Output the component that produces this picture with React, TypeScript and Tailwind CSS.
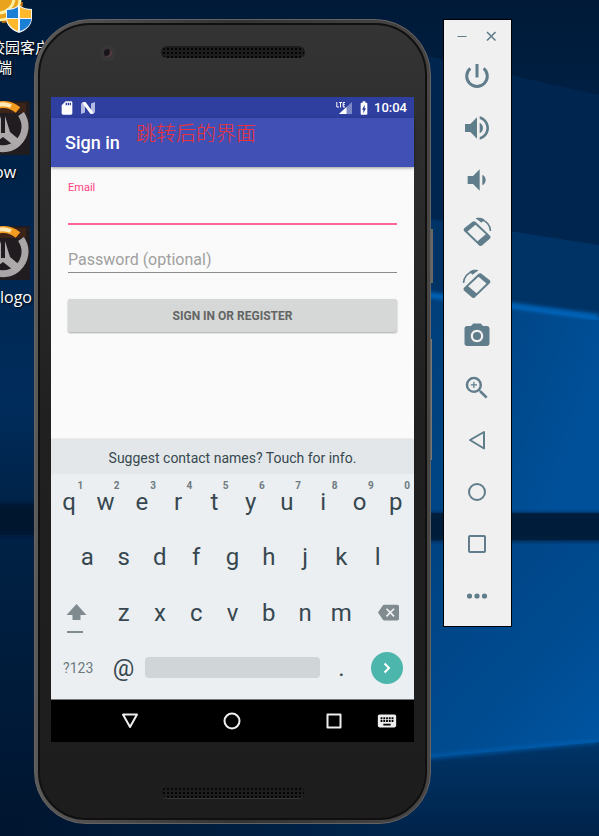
import type { ReactNode } from "react";
import {
  MdBackspace,
  MdBatteryChargingFull,
  MdCameraAlt,
  MdKeyboard,
  MdSdStorage,
  MdVolumeDown,
  MdVolumeUp,
  MdZoomIn,
} from "react-icons/md";

function Wallpaper() {
  return (
    <svg
      className="absolute inset-0 h-full w-full"
      viewBox="0 0 599 836"
      preserveAspectRatio="none"
      aria-hidden="true"
    >
      <defs>
        <linearGradient id="sky" x1="0" y1="0" x2="0" y2="1">
          <stop offset="0" stopColor="#001a38" />
          <stop offset="0.2" stopColor="#00234a" />
          <stop offset="1" stopColor="#00254c" />
        </linearGradient>
        <linearGradient id="left" x1="0" y1="0" x2="0" y2="1">
          <stop offset="0" stopColor="#001b3a" />
          <stop offset="0.48" stopColor="#002c5c" />
          <stop offset="0.6" stopColor="#002348" />
          <stop offset="1" stopColor="#00152f" />
        </linearGradient>
        <linearGradient id="fade">
          <stop offset="0" stopColor="#00152f" />
          <stop offset="1" stopColor="#00254c" />
        </linearGradient>
        <linearGradient id="pane" x1="0" y1="0" x2="1" y2="0.4">
          <stop offset="0" stopColor="#003b73" />
          <stop offset="1" stopColor="#005099" />
        </linearGradient>
        <linearGradient id="pane2" x1="0" y1="0" x2="1" y2="1">
          <stop offset="0" stopColor="#00417f" />
          <stop offset="0.6" stopColor="#004b90" />
          <stop offset="1" stopColor="#0056a4" />
        </linearGradient>
        <linearGradient id="base" x1="0" y1="0" x2="0" y2="1">
          <stop offset="0" stopColor="#003467" />
          <stop offset="1" stopColor="#00234a" />
        </linearGradient>
        <filter id="soft">
          <feGaussianBlur stdDeviation="2" />
        </filter>
      </defs>
      <rect width="599" height="836" fill="url(#sky)" />
      <rect width="200" height="836" fill="url(#left)" />
      <rect y="815" width="400" height="21" fill="url(#fade)" />
      <path d="M400 50 599 95V245L400 214Z" fill="#00264f" />
      <path d="M400 214 599 245V320L400 292Z" fill="#003365" />
      <path d="M400 292 599 318V513H400Z" fill="url(#pane)" />
      <path d="M400 291 599 317" stroke="#0078dc" strokeWidth="4" filter="url(#soft)" />
      <path d="M400 540H599V745L400 762Z" fill="url(#pane2)" />
      <path d="M400 760 599 742V836H400Z" fill="url(#base)" />
      <path d="M400 760 599 741" stroke="#0061b4" strokeWidth="3" filter="url(#soft)" />
      <rect x="-10" y="504" width="130" height="31" fill="#00152f" filter="url(#soft)" />
      <rect x="400" y="513" width="210" height="28" fill="#001b3a" filter="url(#soft)" />
    </svg>
  );
}

function ClientIcon() {
  return (
    <svg width="44" height="36" viewBox="0 0 44 36" className="block" aria-hidden="true">
      <circle cx="16" cy="4" r="17" fill="#e9a31c" />
      <path d="M12 20C22 20 31 12 32 0M12 13C20 12 25 6 26 0" stroke="#fff0a0" strokeWidth="3" fill="none" />
      <path d="M14 22C24 22 34 14 34 2" stroke="#b96e08" strokeWidth="2" fill="none" />
      <path d="M31 5C27 8 22 9 18 9V18C18 26 25 31 31 33 37 31 44 26 44 18V9C40 9 35 8 31 5Z" fill="#f4f6f8" />
      <path d="M30 7C27 9 23 10 19 10V18H30ZM32 19V31C38 29 43 25 43 19Z" fill="#1c7fd6" />
      <path d="M32 7C35 9 39 10 43 10V18H32ZM30 19V31C25 29 20 25 19 19Z" fill="#fdb82b" />
    </svg>
  );
}

function GameIcon() {
  return (
    <svg width="54" height="54" viewBox="0 0 54 54" className="block" aria-hidden="true">
      <rect width="54" height="54" fill="#211c20" />
      <path d="M10 2H50V12H10Z" fill="#5a2c12" opacity=".5" />
      <path d="M11 10A23 23 0 0 1 42 9" stroke="#f39a21" strokeWidth="7" fill="none" />
      <path d="M14 7A24 24 0 0 1 35 5" stroke="#ffe9b8" strokeWidth="4" fill="none" />
      <path d="M45 13A22 22 0 1 1 9 13" stroke="#aaa6a8" strokeWidth="7" fill="none" />
      <path d="M25 15 20 31 8 41 13 47 27 36 41 47 46 41 34 31 29 15V32H25Z" fill="#aeaaac" />
    </svg>
  );
}

const desktopText =
  "font-['Open_Sans','Noto_Sans_CJK_SC',sans-serif] leading-5 text-white whitespace-nowrap [text-shadow:1px_1px_2px_#000]";

function DesktopIcons() {
  return (
    <div className="absolute top-0 -left-6 flex w-[72px] flex-col">
      <figure className="flex h-[101px] flex-col">
        <div className="ml-3">
          <ClientIcon />
        </div>
        <figcaption className={`${desktopText} ml-[14px] pt-px text-[15px]`}>
          校园客户
          <br />
          <span className="ml-[7px]">端</span>
        </figcaption>
      </figure>
      <figure className="flex h-[125px] flex-col">
        <GameIcon />
        <figcaption className={`${desktopText} mt-[7px] ml-[18px] text-base`}>ow</figcaption>
      </figure>
      <figure className="flex flex-col">
        <GameIcon />
        <figcaption className={`${desktopText} mt-[7px] ml-6 text-base`}>logo</figcaption>
      </figure>
    </div>
  );
}

function Speaker() {
  return (
    <div className="h-[13px] w-36 rounded-full border border-[#1b1b1b] border-b-[#343434] bg-[#1d1d1d] bg-[radial-gradient(#050505_1px,transparent_1px)] bg-[size:4px_4px]" />
  );
}

function StatusBar() {
  return (
    <div className="flex h-[21px] items-center bg-[#2f3f9f] px-[7px] text-white">
      <MdSdStorage size={16} className="ml-px" />
      <svg width="14" height="12" viewBox="0 0 14 12" className="ml-[6px]" aria-hidden="true">
        <path d="M0 1.500 4 0V10.500L0 12ZM10 1.500 14 0V10.500L10 12Z" fill="#b3bbe3" />
        <path d="M1 .6 4.500 0 13 11.400 9.500 12Z" fill="#fff" />
      </svg>
      <div className="ml-auto flex items-center">
        <svg width="17" height="14" viewBox="0 0 17 14" className="mr-[3px]" aria-hidden="true">
          <path d="M16 1V13H3Z" fill="#7d88c6" />
          <path d="M10.500 6V13H3Z" fill="#fff" />
          <path d="M.8 1V6H3M3.200 1.500H6M4.500 1.500V6.500M9 1.500H7.200V6H9M7.200 3.700H8.800" stroke="#fff" fill="none" />
        </svg>
        <MdBatteryChargingFull size={16} className="mr-[2px]" />
        <span className="text-[13px] leading-5 font-medium">10:04</span>
      </div>
    </div>
  );
}

function SignInForm() {
  return (
    <form className="flex h-[273px] flex-col px-[17px] pt-3" onSubmit={(e) => e.preventDefault()}>
      <label htmlFor="email" className="text-[11px] leading-[18px] text-[#ff4081]">
        Email
      </label>
      <input
        id="email"
        type="email"
        className="h-7 border-b-2 border-[#ff6496] bg-transparent text-base text-[#333] outline-none"
      />
      <div className="relative mt-[22px] flex">
        <label htmlFor="password" className="sr-only">
          Password (optional)
        </label>
        <input
          id="password"
          type="password"
          placeholder="Password (optional)"
          className="h-[26px] w-full border-b border-[#8c8c8c] bg-transparent text-base text-[#333] outline-none placeholder:text-[#a0a0a0]"
        />
      </div>
      <button
        type="submit"
        className="mt-[26px] h-[33px] rounded-xs bg-[#d6d8d7] text-xs font-bold text-[#636564] shadow-[0_1px_2px_#0005]"
      >
        SIGN IN OR REGISTER
      </button>
    </form>
  );
}

function Key({ label, hint }: { label: string; hint?: string }) {
  return (
    <button type="button" className="relative h-[55px] flex-1 text-2xl leading-none text-[#37474f]">
      {label}
      {hint && (
        <span className="absolute top-[6px] right-1 text-[10px] leading-3 font-bold text-[#6d7a80]">{hint}</span>
      )}
    </button>
  );
}

function Keyboard() {
  return (
    <div className="bg-[#ebeff2] text-[#37474f]">
      <p className="h-[34px] bg-[#e3e7ea] pt-px text-center text-sm leading-[34px] shadow-[0_-1px_2px_#0002]">
        Suggest contact names? Touch for info.
      </p>
      <div className="flex">
        {"qwertyuiop".split("").map((letter, i) => (
          <Key key={letter} label={letter} hint={String((i + 1) % 10)} />
        ))}
      </div>
      <div className="flex px-[5%]">
        {"asdfghjkl".split("").map((letter) => (
          <Key key={letter} label={letter} />
        ))}
      </div>
      <div className="mt-px flex">
        <button type="button" aria-label="Shift" className="flex w-[15%] items-center pt-3 pl-[15px]">
          <svg width="21" height="30" viewBox="0 0 21 30" aria-hidden="true">
            <path d="M10.500 0 20.500 11H14.500V16H6.500V11H.5Z" fill="#808b90" />
            <path d="M1 28H17" stroke="#808b90" strokeWidth="2" />
          </svg>
        </button>
        {"zxcvbnm".split("").map((letter) => (
          <Key key={letter} label={letter} />
        ))}
        <button type="button" aria-label="Backspace" className="flex w-[15%] items-center justify-end pr-[15px] text-[#808b90]">
          <MdBackspace size={21} />
        </button>
      </div>
      <div className="flex h-[60px] items-start border-b border-[#777]">
        <button type="button" className="h-[55px] w-[15%] text-sm text-[#6d7a80]">
          ?123
        </button>
        <button type="button" className="h-[55px] w-[10%] text-2xl">
          @
        </button>
        <button type="button" aria-label="Space" className="mx-[3px] mt-[17px] h-[21px] flex-1 rounded-sm bg-[#d0d5d8]" />
        <button type="button" className="h-[55px] w-[10%] text-2xl">
          .
        </button>
        <span className="flex w-[15%] justify-center pt-3">
          <button
            type="button"
            aria-label="Next"
            className="flex size-8 items-center justify-center rounded-full bg-[#4db6ac] text-white"
          >
            <svg width="20" height="20" viewBox="0 0 20 20" fill="none" stroke="currentColor" strokeWidth="2" aria-hidden="true">
              <path d="M7.500 5.500 12 10 7.500 14.500" />
            </svg>
          </button>
        </span>
      </div>
    </div>
  );
}

function NavBar() {
  return (
    <nav className="flex h-[42px] items-center bg-black pr-4 pl-[68px] text-[#eee]">
      <button type="button" aria-label="Back">
        <svg width="22" height="22" viewBox="0 0 22 22" fill="none" stroke="currentColor" strokeWidth="2" strokeLinejoin="round">
          <path d="M4 4.500H18L11 17Z" />
        </svg>
      </button>
      <button type="button" aria-label="Home" className="ml-auto">
        <svg width="22" height="22" viewBox="0 0 22 22" fill="none" stroke="currentColor" strokeWidth="2">
          <circle cx="11" cy="11" r="7.500" />
        </svg>
      </button>
      <button type="button" aria-label="Overview" className="ml-auto">
        <svg width="22" height="22" viewBox="0 0 22 22" fill="none" stroke="currentColor" strokeWidth="2" strokeLinejoin="round">
          <rect x="4.500" y="4.500" width="13" height="13" />
        </svg>
      </button>
      <button type="button" aria-label="Switch keyboard" className="ml-[31px]">
        <MdKeyboard size={22} />
      </button>
    </nav>
  );
}

function Phone() {
  return (
    <div className="absolute top-[19px] left-[34px] w-[397px]">
      <div className="absolute top-[210px] -right-[2px] h-[54px] w-1 bg-[#6a6767]" />
      <div className="absolute top-[320px] -right-px h-[121px] w-1 bg-[#777]" />
      <div className="relative rounded-t-[56px] rounded-b-[52px] border border-[#656262] bg-linear-to-r from-[#5c5959] via-[#333] to-[#484545] p-[3px]">
        <div className="rounded-t-[52px] rounded-b-[48px] border-2 border-[#101010] bg-linear-to-b from-[#343434] via-[#202020] to-[#1d1d1d] px-[11px]">
          <div className="relative flex h-[72px] justify-center pt-[21px]">
            <div className="absolute top-5 left-[49px] flex size-4 items-center justify-center rounded-full bg-[#383637]">
              <div className="size-2 rounded-full bg-[#17141a] shadow-[inset_-2px_-1px_1px_#584047]" />
            </div>
            <Speaker />
          </div>
          <div className="bg-[#fafafa] font-[Roboto,sans-serif]">
            <StatusBar />
            <header className="relative flex h-[49px] items-center bg-[#4050b5] pl-[14px] shadow-[0_1px_3px_#0006]">
              <h1 className="text-lg font-medium text-white">Sign in</h1>
              <p className="absolute top-[2px] left-[85px] font-['Noto_Sans_CJK_SC',sans-serif] text-xl leading-[26px] font-light text-[#f03038]">
                跳转后的界面
              </p>
            </header>
            <SignInForm />
            <Keyboard />
            <NavBar />
          </div>
          <div className="flex h-[76px] justify-center pt-[44px]">
            <Speaker />
          </div>
        </div>
      </div>
    </div>
  );
}

function RotateIcon({ flipped = false }: { flipped?: boolean }) {
  return (
    <svg width="32" height="32" viewBox="0 0 32 32" className={flipped ? "-scale-x-100" : ""} aria-hidden="true">
      <path
        fill="currentColor"
        fillRule="evenodd"
        d="M11.800 5.500Q13.200 4.700 14.500 5.800L29 19.800Q30.200 21.300 29 22.600L21 29.600Q19.500 30.600 18.200 29.500L3 15Q2 13.600 3.200 12.300ZM14.500 8.800 6.500 15.500 16.500 25.300 24.800 18.300Z"
      />
      <path d="M20 3.500C25.500 5 29 9 29.500 15" stroke="currentColor" strokeWidth="1.600" fill="none" />
      <path d="M14.500 2.200C18 1.200 21 1.800 23.500 3.400L20.500 6.800Z" fill="currentColor" />
    </svg>
  );
}

function Outline({ children }: { children: ReactNode }) {
  return (
    <svg width="24" height="24" viewBox="0 0 24 24" fill="none" stroke="currentColor" strokeWidth="2" strokeLinejoin="round" aria-hidden="true">
      {children}
    </svg>
  );
}

const tools: { name: string; icon: ReactNode }[] = [
  {
    name: "Power",
    icon: (
      <svg width="32" height="32" viewBox="0 0 32 32" fill="none" stroke="currentColor" strokeWidth="3" aria-hidden="true">
        <path d="M16 4V17.500M9.300 8.300A10.300 10.300 0 1 0 22.700 8.300" />
      </svg>
    ),
  },
  { name: "Volume up", icon: <MdVolumeUp size={32} /> },
  { name: "Volume down", icon: <MdVolumeDown size={32} /> },
  { name: "Rotate left", icon: <RotateIcon /> },
  { name: "Rotate right", icon: <RotateIcon flipped /> },
  { name: "Take screenshot", icon: <MdCameraAlt size={30} /> },
  { name: "Zoom", icon: <MdZoomIn size={30} /> },
  { name: "Back", icon: <Outline><path d="M19 4V20.500L5 12Z" /></Outline> },
  { name: "Home", icon: <Outline><circle cx="12" cy="12" r="8" /></Outline> },
  { name: "Overview", icon: <Outline><rect x="4" y="4" width="16" height="16" rx="1" /></Outline> },
  {
    name: "More",
    icon: (
      <svg width="24" height="24" viewBox="0 0 24 24" fill="currentColor" aria-hidden="true">
        <circle cx="4.500" cy="12" r="2.600" />
        <circle cx="12" cy="12" r="2.600" />
        <circle cx="19.500" cy="12" r="2.600" />
      </svg>
    ),
  },
];

function EmulatorToolbar() {
  return (
    <aside className="absolute top-[19px] left-[443px] flex w-[69px] flex-col border border-black bg-[#f0f0f0] pr-px pb-1 text-[#607d8b]">
      <div className="flex h-[30px] items-center justify-between px-3 pt-1">
        <button type="button" aria-label="Minimize">
          <svg width="12" height="12" viewBox="0 0 12 12" stroke="currentColor" className="block">
            <path d="M1.500 5.500H10.500" />
          </svg>
        </button>
        <button type="button" aria-label="Close">
          <svg width="12" height="12" viewBox="0 0 12 12" stroke="currentColor" strokeWidth="1.600" className="block">
            <path d="M1 1 9.500 9.500M9.500 1 1 9.500" />
          </svg>
        </button>
      </div>
      {tools.map((tool) => (
        <button key={tool.name} type="button" aria-label={tool.name} className="flex h-[52px] items-center justify-center">
          {tool.icon}
        </button>
      ))}
    </aside>
  );
}

export default function App() {
  return (
    <main className="relative h-screen min-h-[836px] overflow-hidden bg-[#00234a]">
      <Wallpaper />
      <DesktopIcons />
      <Phone />
      <EmulatorToolbar />
    </main>
  );
}
